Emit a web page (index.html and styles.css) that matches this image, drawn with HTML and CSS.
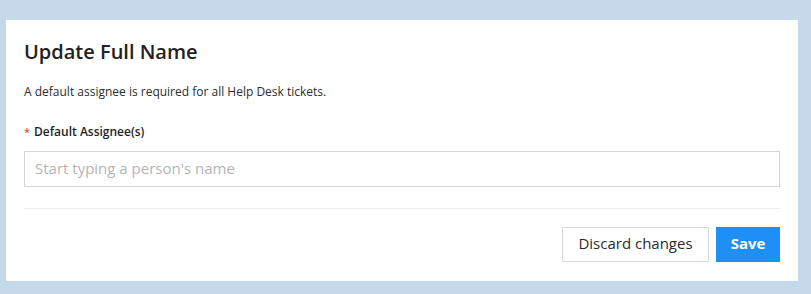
FILE: index.html
```html
<!DOCTYPE html>
<html lang="en">
<head>
<meta charset="utf-8">
<title>Update Full Name</title>
<link rel="stylesheet" href="styles.css">
</head>
<body>
<div class="card">
  <h1 class="title">Update Full Name</h1>
  <p class="desc">A default assignee is required for all Help Desk tickets.</p>
  <label class="label" for="assignee"><span class="req">*</span>Default Assignee(s)</label>
  <input class="input" id="assignee" type="text" placeholder="Start typing a person's name">
  <div class="footer">
    <button class="btn btn-default" type="button">Discard changes</button>
    <button class="btn btn-primary" type="button">Save</button>
  </div>
</div>
</body>
</html>
```
FILE: styles.css
```css
html, body {
  margin: 0;
  padding: 0;
}
body {
  background: #c6d9eb;
  padding: 20px 13px 13px 6px;
  font-family: "Open Sans", "Liberation Sans", sans-serif;
  color: #2a2a2a;
}
.card {
  background: #fff;
  height: 261px;
  box-sizing: border-box;
  padding: 18px 18px 19px 18px;
  display: flex;
  flex-direction: column;
}
.title {
  margin: 0;
  font-size: 20px;
  line-height: 28px;
  font-weight: 600;
  color: #222;
}
.desc {
  margin: 18px 0 0;
  font-size: 12px;
  line-height: 16px;
  color: #2c2c2c;
}
.label {
  margin-top: 24px;
  font-size: 12px;
  line-height: 16px;
  font-weight: 600;
  color: #1e1e1e;
  display: flex;
  align-items: center;
}
.req {
  color: #e8505b;
  font-size: 11px;
  margin-right: 4px;
}
.input {
  margin-top: 11px;
  height: 36px;
  box-sizing: border-box;
  border: 1px solid #d4d4d4;
  border-radius: 0;
  padding: 0 10px 3px;
  font-family: inherit;
  font-size: 15px;
  color: #333;
  outline: none;
}
.input::placeholder {
  color: #b5b5b5;
}
.footer {
  margin-top: 21px;
  border-top: 1px solid #ececec;
  padding-top: 18px;
  display: flex;
  justify-content: flex-end;
  gap: 7px;
}
.btn {
  height: 35px;
  box-sizing: border-box;
  font-family: inherit;
  font-size: 15px;
  border-radius: 0;
  cursor: pointer;
  padding: 0 0 3px;
}
.btn-default {
  width: 147px;
  background: #fff;
  border: 1px solid #d8d8d8;
  color: #2c2c2c;
}
.btn-primary {
  width: 64px;
  background: #1e8ff5;
  border: 1px solid #1e8ff5;
  color: #fff;
  font-weight: 700;
}
```
